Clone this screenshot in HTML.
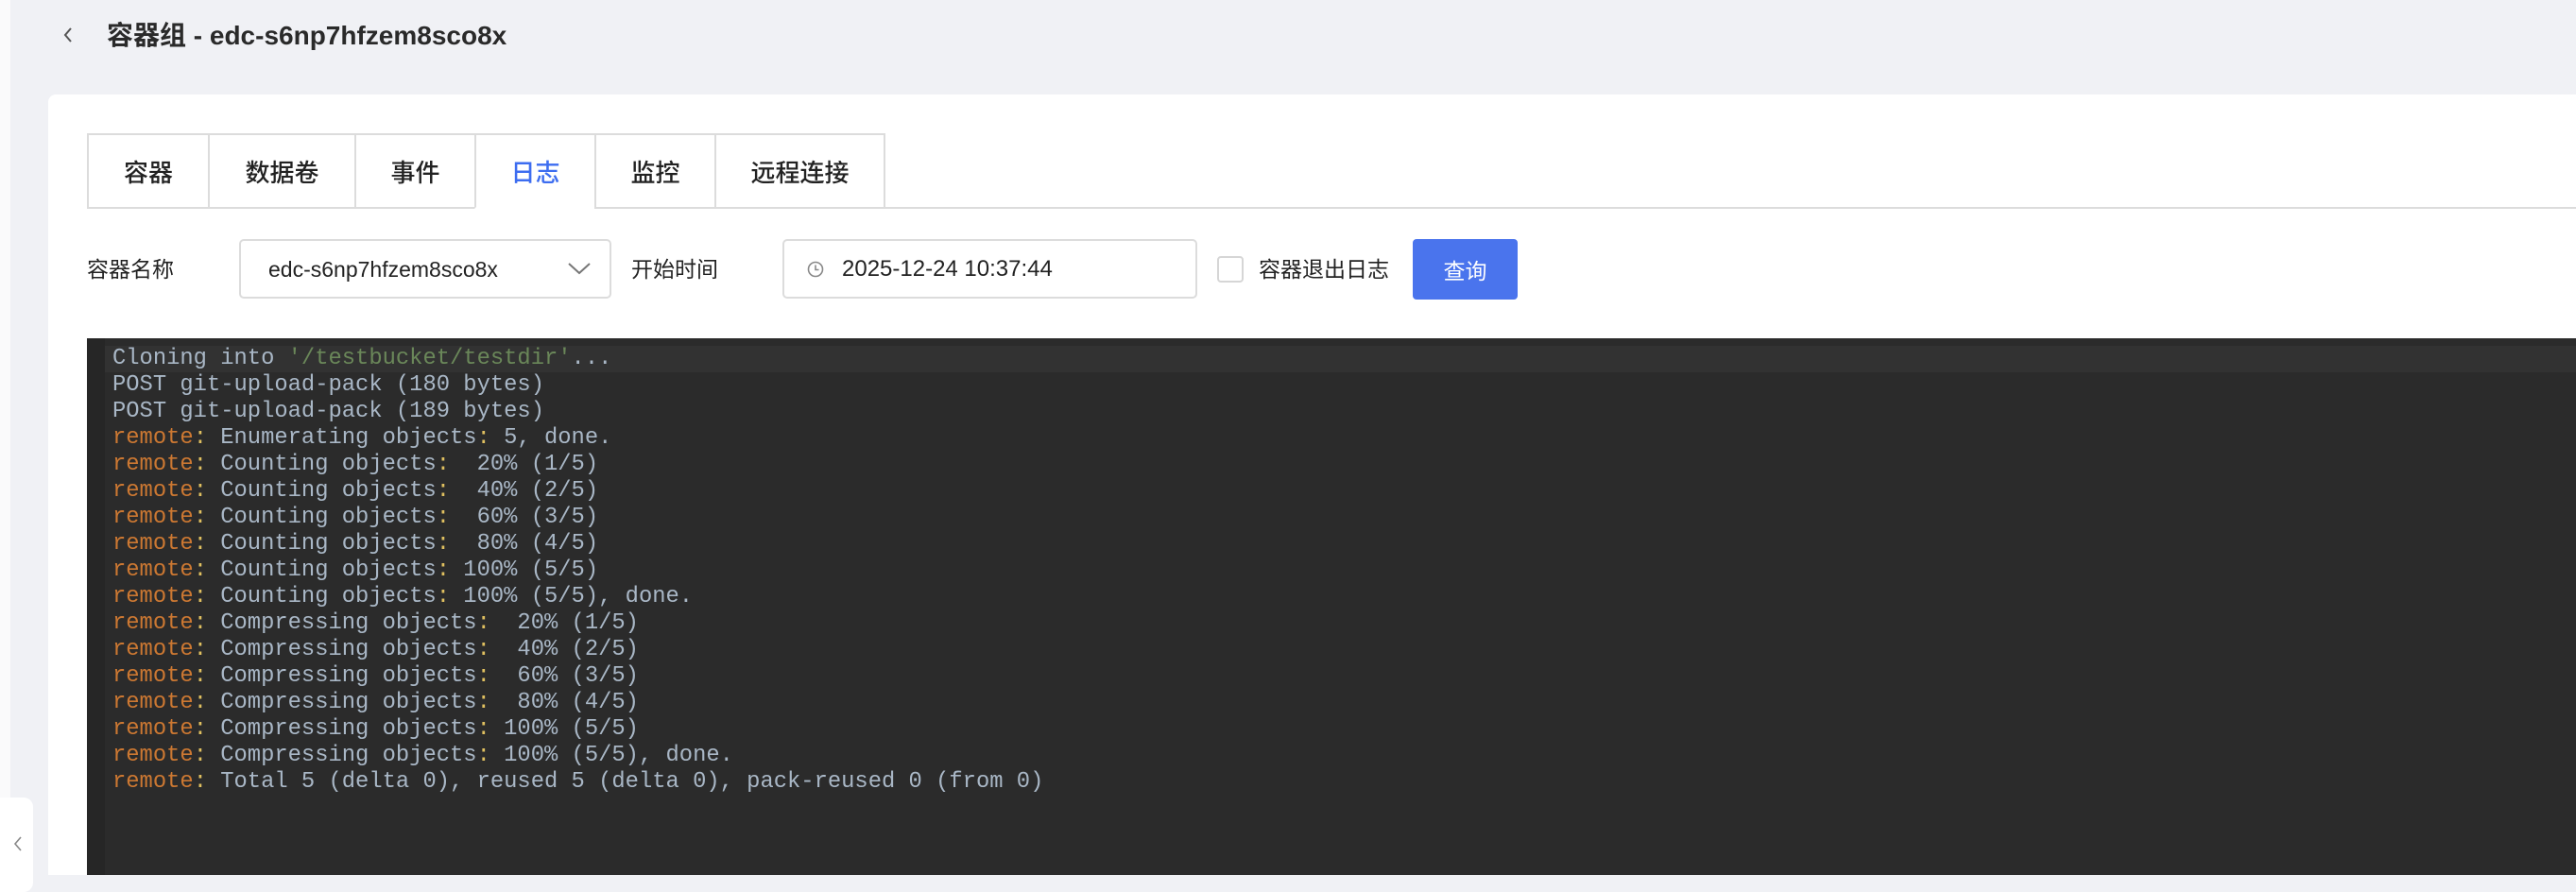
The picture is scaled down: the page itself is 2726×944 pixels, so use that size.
<!DOCTYPE html>
<html><head><meta charset="utf-8"><style>
*{margin:0;padding:0;box-sizing:border-box}
body{width:2726px;height:926px;overflow:hidden;background:#f0f1f5;font-family:"Liberation Sans","Noto Sans CJK SC",sans-serif;position:relative;color:#333}
.abs{position:absolute}
.strip{left:0;top:0;width:11px;height:926px;background:#fafafb}
.title{left:113px;top:20px;font-size:28px;font-weight:bold;color:#2a2a2a;line-height:36px}
.back{left:64px;top:22px}
.card{left:51px;top:100px;right:0;bottom:0;background:#fff;border-top-left-radius:8px}
.tabs{left:92px;top:141px;height:80px;display:flex}
.tab{height:80px;border:2px solid #dcdcdc;border-right:none;font-size:26px;font-weight:500;display:flex;align-items:center;justify-content:center;background:#fff;color:#222}
.tab:last-child{border-right:2px solid #dcdcdc}
.tabline{left:92px;right:0;top:219px;height:2px;background:#dcdcdc}
.lbl{font-size:23px;color:#222;line-height:30px}
.box{border:2px solid #dcdcdc;border-radius:5px;background:#fff;height:63px}
.btn{left:1495px;top:253px;width:111px;height:64px;background:#4a74ed;border-radius:4px;color:#fff;font-size:23px;display:flex;align-items:center;justify-content:center}
.log{left:92px;top:358px;right:0;bottom:0;background:#2b2b2b}
.gut{left:92px;top:358px;width:19px;bottom:0;background:#262626}
.hl{left:111px;top:366px;right:0;height:28px;background:#323232}
pre{position:absolute;left:119px;top:366px;font-family:"Liberation Mono",monospace;font-size:23.8px;line-height:28px;color:#a9b7c6}
.r{color:#cc7832}.c{color:#e0c060}.g{color:#6a8759}
</style></head><body>
<div class="abs strip"></div>
<svg class="abs back" width="16" height="30" viewBox="0 0 16 30"><path d="M11 8 L5 15 L11 22" stroke="#555" stroke-width="2" fill="none"/></svg>
<div class="abs title">容器组 - edc-s6np7hfzem8sco8x</div>
<div class="abs card"></div>
<div class="abs tabline"></div>
<div class="abs tabs">
<div class="tab" style="width:128px">容器</div>
<div class="tab" style="width:155px">数据卷</div>
<div class="tab" style="width:127px">事件</div>
<div class="tab" style="width:127px;color:#3d6df0;border-bottom-color:#fff">日志</div>
<div class="tab" style="width:127px">监控</div>
<div class="tab" style="width:181px">远程连接</div>
</div>
<div class="abs lbl" style="left:92px;top:270px">容器名称</div>
<div class="abs box" style="left:253px;top:253px;width:394px"></div>
<div class="abs lbl" style="left:284px;top:270px;font-size:23px">edc-s6np7hfzem8sco8x</div>
<svg class="abs" style="left:600px;top:276px" width="26" height="16"><path d="M2 3 L13 13 L24 3" stroke="#777" stroke-width="2" fill="none"/></svg>
<div class="abs lbl" style="left:668px;top:270px">开始时间</div>
<div class="abs box" style="left:828px;top:253px;width:439px"></div>
<svg class="abs" style="left:854px;top:276px" width="18" height="18"><circle cx="9" cy="9" r="7.5" stroke="#888" stroke-width="1.6" fill="none"/><path d="M9 4.5 V9.5 H12.5" stroke="#888" stroke-width="1.6" fill="none"/></svg>
<div class="abs lbl" style="left:891px;top:270px;font-size:24px">2025-12-24 10:37:44</div>
<div class="abs" style="left:1288px;top:271px;width:28px;height:28px;border:2px solid #d6d6d6;border-radius:4px;background:#fff"></div>
<div class="abs lbl" style="left:1332px;top:270px">容器退出日志</div>
<div class="abs btn">查询</div>
<div class="abs log"></div>
<div class="abs gut"></div>
<div class="abs hl"></div>
<pre>Cloning into <span class="g">'/testbucket/testdir'</span>...
POST git-upload-pack (180 bytes)
POST git-upload-pack (189 bytes)
<span class="r">remote</span><span class="c">:</span> Enumerating objects<span class="c">:</span> 5, done.
<span class="r">remote</span><span class="c">:</span> Counting objects<span class="c">:</span>  20% (1/5)
<span class="r">remote</span><span class="c">:</span> Counting objects<span class="c">:</span>  40% (2/5)
<span class="r">remote</span><span class="c">:</span> Counting objects<span class="c">:</span>  60% (3/5)
<span class="r">remote</span><span class="c">:</span> Counting objects<span class="c">:</span>  80% (4/5)
<span class="r">remote</span><span class="c">:</span> Counting objects<span class="c">:</span> 100% (5/5)
<span class="r">remote</span><span class="c">:</span> Counting objects<span class="c">:</span> 100% (5/5), done.
<span class="r">remote</span><span class="c">:</span> Compressing objects<span class="c">:</span>  20% (1/5)
<span class="r">remote</span><span class="c">:</span> Compressing objects<span class="c">:</span>  40% (2/5)
<span class="r">remote</span><span class="c">:</span> Compressing objects<span class="c">:</span>  60% (3/5)
<span class="r">remote</span><span class="c">:</span> Compressing objects<span class="c">:</span>  80% (4/5)
<span class="r">remote</span><span class="c">:</span> Compressing objects<span class="c">:</span> 100% (5/5)
<span class="r">remote</span><span class="c">:</span> Compressing objects<span class="c">:</span> 100% (5/5), done.
<span class="r">remote</span><span class="c">:</span> Total 5 (delta 0), reused 5 (delta 0), pack-reused 0 (from 0)</pre>
<div class="abs" style="left:-10px;top:844px;width:45px;height:100px;background:#fff;border-radius:10px"></div>
<svg class="abs" style="left:12px;top:883px" width="14" height="20"><path d="M10 3 L4 10 L10 17" stroke="#888" stroke-width="1.6" fill="none"/></svg>
</body></html>
